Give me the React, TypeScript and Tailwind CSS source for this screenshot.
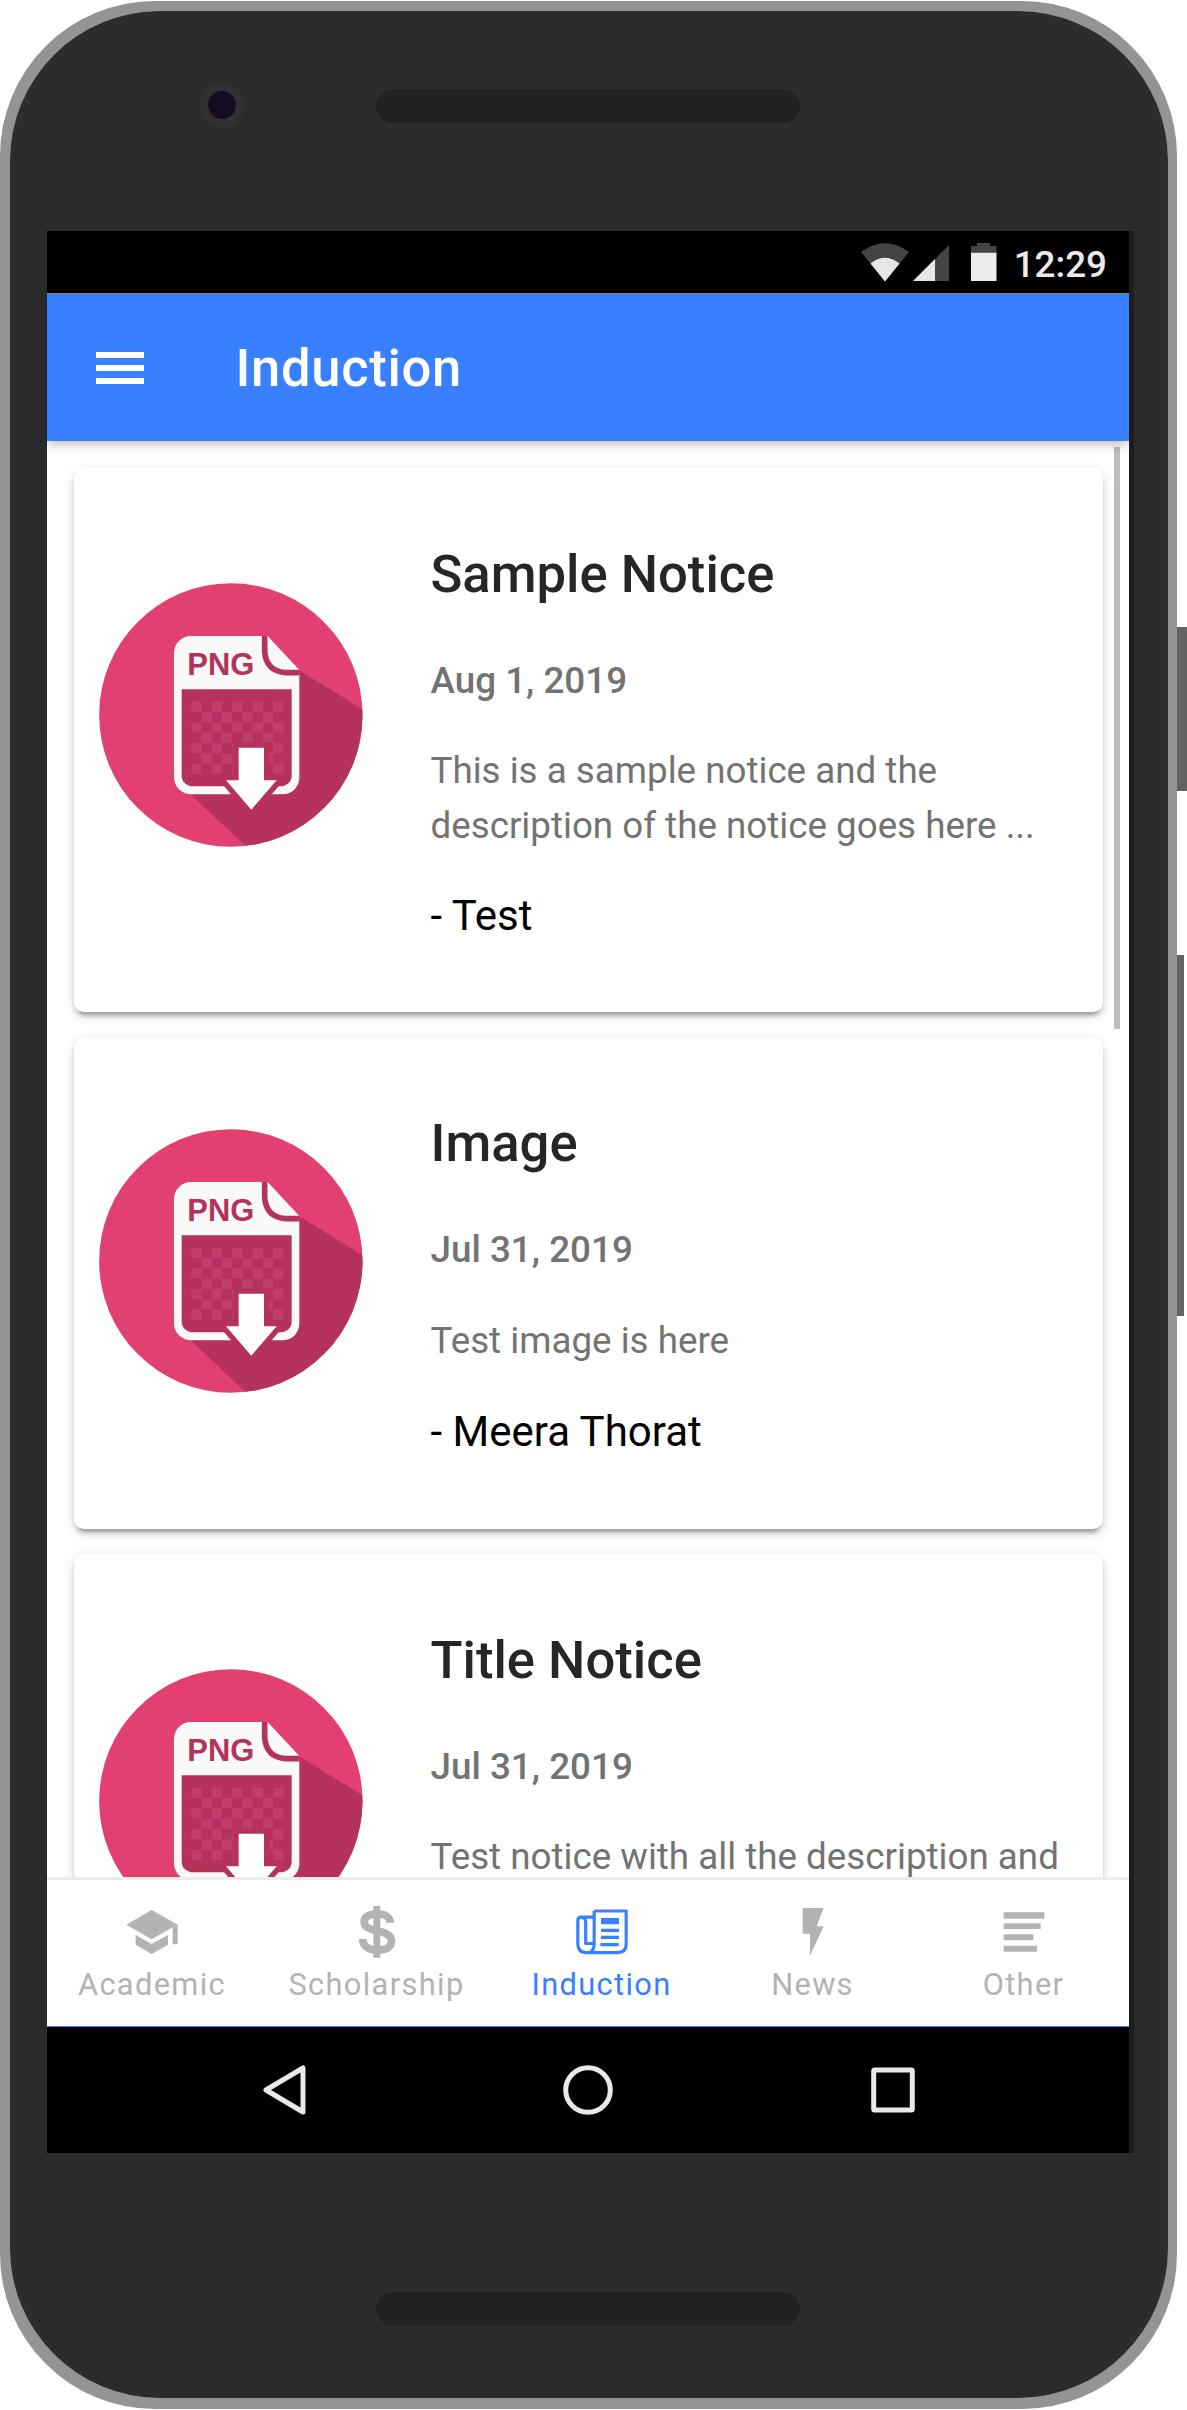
import React from "react";

type Notice = {
  title: string;
  date: string;
  lines: string[];
  author: string;
  cardClass: string;
  iconClass: string;
  authorClass: string;
};

const notices: Notice[] = [
  {
    title: "Sample Notice",
    date: "Aug 1, 2019",
    lines: ["This is a sample notice and the", "description of the notice goes here ..."],
    author: "- Test",
    cardClass: "h-[544px]",
    iconClass: "mt-[115px]",
    authorClass: "mt-[38px]",
  },
  {
    title: "Image",
    date: "Jul 31, 2019",
    lines: ["Test image is here"],
    author: "- Meera Thorat",
    cardClass: "h-[491px]",
    iconClass: "mt-[91px]",
    authorClass: "mt-[39.5px]",
  },
  {
    title: "Title Notice",
    date: "Jul 31, 2019",
    lines: ["Test notice with all the description and"],
    author: "",
    cardClass: "h-[544px]",
    iconClass: "mt-[115px]",
    authorClass: "mt-[37px]",
  },
];

const cells: [number, number][] = [];
for (let r = 0; r < 7; r++) {
  for (let c = 0; c < 9; c++) {
    if ((r + c) % 2 === 0) cells.push([r, c]);
  }
}

function PngBadge({ id, className }: { id: string; className: string }) {
  return (
    <svg viewBox="27 27 792 792" className={`h-[264px] w-[264px] shrink-0 ${className}`}>
      <clipPath id={id}>
        <circle cx="422.5" cy="423" r="395" />
      </clipPath>
      <circle cx="422.5" cy="423" r="395" fill="#e23f72" />
      <g clipPath={`url(#${id})`}>
        <path d="M628 289L830 414V830H482L303 662L400 400Z" fill="#b5325d" />
      </g>
      <path
        d="M303 186H533L628 288V611A50 50 0 0 1 578 661H303A51 51 0 0 1 252 610V237A51 51 0 0 1 303 186Z"
        fill="#f9f9f9"
      />
      <path d="M524 186V232Q528 292 588 296H629" fill="none" stroke="#b5325d" strokeWidth="17" />
      <path d="M275 346H605V605A34 32 0 0 1 571 637H309A34 32 0 0 1 275 605Z" fill="#b5325d" />
      {cells.map(([r, c]) => (
        <rect key={`${r}-${c}`} x={304 + c * 30.7} y={383 + r * 31} width="30.7" height="31" fill="#bf3e6d" />
      ))}
      <path
        d="M446 521H522V619H560L484 707L408 619H446Z"
        fill="#b5325d"
        stroke="#b5325d"
        strokeWidth="32"
      />
      <path d="M446 521H522V619H560L484 707L408 619H446Z" fill="#fff" />
      <text
        x="292"
        y="303"
        fontFamily="Liberation Sans, sans-serif"
        fontWeight="700"
        fontSize="96"
        textLength="201"
        lengthAdjust="spacingAndGlyphs"
        fill="#b5325d"
      >
        PNG
      </text>
    </svg>
  );
}

function NoticeCard({ n, i }: { n: Notice; i: number }) {
  return (
    <article
      className={`flex w-[1029px] shrink-0 rounded-[10px] bg-white pl-[25px] shadow-[0_8px_3px_-5px_rgba(0,0,0,0.2),0_5px_5px_0_rgba(0,0,0,0.14),0_3px_13px_0_rgba(0,0,0,0.12)] ${n.cardClass}`}
    >
      <PngBadge id={`disc-${i}`} className={n.iconClass} />
      <div className="ml-[67.5px] flex-1 pt-[75.5px]">
        <h2 className="text-[52.6px] leading-[60px] font-medium whitespace-nowrap text-[#262626]">{n.title}</h2>
        <p className="mt-[49px] text-[36.8px] leading-[55px] font-medium text-[#737373]">{n.date}</p>
        <div className="mt-[35.5px] text-[36.75px] leading-[55px] whitespace-nowrap text-[#737373]">
          {n.lines.map((l) => (
            <p key={l}>{l}</p>
          ))}
        </div>
        <p className={`text-[42px] leading-[50px] text-black ${n.authorClass}`}>{n.author}</p>
      </div>
    </article>
  );
}

const tabs = [
  {
    label: "Academic",
    width: "w-[210px]",
    color: "text-[#b3b3b3]",
    box: "37 60 180 162",
    icon: (
      <g fill="currentColor">
        <path d="M50 119L126 75L204 119V178H189V127L126 163Z" />
        <path d="M78 150L126 177L175 150V179L126 207L78 179Z" />
      </g>
    ),
  },
  {
    label: "Scholarship",
    width: "w-[239px]",
    color: "text-[#b3b3b3]",
    box: "710 60 180 162",
    icon: (
      <g>
        <rect x="789" y="63" width="21" height="155" fill="currentColor" />
        <path
          d="M839.5 113C839.5 95 822 86.500 801 86.500C778 86.500 761.500 95 761.500 110C761.500 126 774 132 803 138C835 144 843.500 155 843.500 169C843.500 187 826 195.500 801 195.500C776 195.500 757 184 757 162"
          fill="none"
          stroke="currentColor"
          strokeWidth="23"
        />
      </g>
    ),
  },
  {
    label: "Induction",
    width: "w-[211px]",
    color: "text-[#3880ff]",
    box: "35 60 180 162",
    icon: (
      <g>
        <path
          d="M101.500 78H197.500V178Q197.500 203 171 203H78Q52.500 203 52.500 175V107Q52.500 96.500 64 96.500H101.500M101.500 78V178Q101.500 196 88 203M62 96.500Q76 96.500 76 112V175.500H101"
          fill="none"
          stroke="currentColor"
          strokeWidth="9.500"
          strokeLinejoin="round"
        />
        <path d="M122 99H176V118H122ZM122 131H176V141H122ZM122 152H176V162H122ZM120 174H175V184H120Z" fill="currentColor" />
      </g>
    ),
  },
  {
    label: "News",
    width: "w-[211px]",
    color: "text-[#b3b3b3]",
    box: "667 60 180 162",
    icon: <path d="M726 69H789L768 124H789L748 212V146H726Z" fill="currentColor" />,
  },
  {
    label: "Other",
    width: "w-[211px]",
    color: "text-[#b3b3b3]",
    box: "1300 60 180 162",
    icon: (
      <path
        d="M1329 82H1451V101H1329ZM1329 115H1440V132H1329ZM1329 148H1418V166H1329ZM1329 182H1429V200H1329Z"
        fill="currentColor"
      />
    ),
  },
];

function Speaker({ className }: { className: string }) {
  return (
    <div className={`h-[44px] w-[434px] rounded-[22px] border-[5px] border-[#2c2d2c] bg-[#232122] ${className}`} />
  );
}

function StatusBar() {
  return (
    <div className="flex h-[62px] shrink-0 justify-end bg-black pr-[22px]">
      <svg viewBox="861 243 137 39" className="mt-[12px] mr-[16px] h-[39px] w-[137px]">
        <path d="M861 252Q885 234.500 909 252L885 281.500Z" fill="#444" />
        <path d="M870.500 263.500Q885 252 899.500 263.500L885 281.500Z" fill="#e6e6e6" />
        <path d="M949 245V281H913Z" fill="#444" />
        <path d="M935 259V281H913Z" fill="#e6e6e6" />
        <path d="M977 243H990V246H996.500V254H971V246H977Z" fill="#444" />
        <path d="M971 252.700H996.500V281H971Z" fill="#ebebeb" />
      </svg>
      <span className="mt-[9px] text-[36.8px] leading-[49px] font-medium text-[#ebebeb]">12:29</span>
    </div>
  );
}

function Screen() {
  return (
    <div className="ml-[29px] flex h-[1922px] w-[1087px] flex-col border-r-[5px] border-[#1f1e1f] bg-white">
      <StatusBar />
      <header className="relative z-10 flex h-[148px] shrink-0 items-center border-t border-[#8a8a80] bg-[#3880ff] pl-[49px] shadow-[0_4px_9px_0_rgba(0,0,0,0.24)]">
        <div className="flex w-[48px] flex-col gap-[7px]">
          <span className="h-[6px] bg-white" />
          <span className="h-[6px] bg-white" />
          <span className="h-[6px] bg-white" />
        </div>
        <h1 className="ml-[91.5px] text-[52.6px] leading-[60px] font-medium tracking-[0.66px] text-white">Induction</h1>
      </header>
      <main className="relative flex h-[1436px] shrink-0 flex-col gap-[25.5px] overflow-hidden pt-[27px] pl-[27px]">
        {notices.map((n, i) => (
          <NoticeCard key={n.title} n={n} i={i} />
        ))}
        <div className="absolute top-[6px] right-[9px] h-[582px] w-[6px] bg-[#bcbcbc]" />
      </main>
      <nav className="flex h-[150px] shrink-0 border-t-[3px] border-b border-t-[#ececec] border-b-[#3880ff]">
        {tabs.map((t) => (
          <div key={t.label} className={`flex flex-col items-center pt-[25px] ${t.width} ${t.color}`}>
            <svg viewBox={t.box} className="h-[54px] w-[60px]">
              {t.icon}
            </svg>
            <span className="mt-[6px] text-[30.8px] leading-[40px] tracking-[1.35px]">{t.label}</span>
          </div>
        ))}
      </nav>
      <div className="flex flex-1 items-center justify-center bg-black">
        <svg viewBox="0 0 60 60" className="mr-[244.500px] h-[60px] w-[60px]" fill="none" stroke="#e9e9e9" strokeWidth="5">
          <path d="M49 8V52L12 30Z" strokeLinejoin="round" />
        </svg>
        <svg viewBox="0 0 60 60" className="h-[60px] w-[60px]" fill="none" stroke="#e9e9e9" strokeWidth="5">
          <circle cx="30" cy="30" r="22.300" />
        </svg>
        <svg viewBox="0 0 60 60" className="ml-[244.500px] h-[60px] w-[60px]" fill="none" stroke="#e9e9e9" strokeWidth="5">
          <rect x="10.700" y="10" width="38.600" height="40" rx="1" />
        </svg>
      </div>
    </div>
  );
}

export default function App() {
  return (
    <div className="flex h-[2410px] w-[1187px] overflow-hidden bg-white pt-px font-['Roboto',sans-serif]">
      <div className="h-[2408px] w-[1177px] shrink-0 overflow-hidden rounded-[155px] border-t-[10px] border-r-[9px] border-b-[11px] border-l-[10px] border-[#949494] bg-[#949494]">
        <div className="flex h-full flex-col rounded-[150px] border-x-[8px] border-t-[8px] border-[#2c2d2c] bg-[#2c2a2c]">
          <div className="flex h-[212px] shrink-0 items-start pt-[63px] pl-[181px]">
            <div className="h-[46px] w-[46px] rounded-full border-[9.500px] border-[#2f302f] bg-[#150c22]" />
            <Speaker className="mt-[2px] ml-[126px]" />
          </div>
          <Screen />
          <Speaker className="mt-[134px] ml-[353px]" />
        </div>
      </div>
      <div className="flex w-[10px] flex-col">
        <div className="mt-[626px] h-[164px] w-[10px] bg-[#646263]" />
        <div className="mt-[164px] h-[361px] w-[7px] bg-[#646263]" />
      </div>
    </div>
  );
}
